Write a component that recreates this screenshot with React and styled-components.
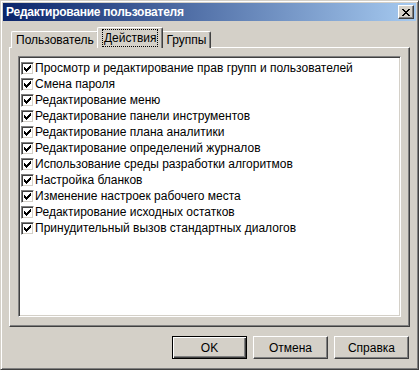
import React from 'react';
import styled, { createGlobalStyle } from 'styled-components';

const GlobalStyle = createGlobalStyle`
  html, body {
    margin: 0;
    padding: 0;
    background: #d4d0c8;
  }
  body {
    font-family: "Liberation Sans", Arial, sans-serif;
    font-size: 12px;
    color: #000;
  }
`;

const Window = styled.div`
  width: 419px;
  height: 370px;
  box-sizing: border-box;
  background: #d4d0c8;
  border: 1px solid;
  border-color: #d4d0c8 #404040 #404040 #d4d0c8;
  box-shadow: inset 1px 1px #fff, inset -1px -1px #808080;
  padding: 2px;
  display: flex;
  flex-direction: column;
`;

const TitleBar = styled.div`
  height: 18px;
  background: linear-gradient(to right, #0a246a, #a6caf0);
  display: flex;
  align-items: center;
  justify-content: space-between;
  padding: 0 2px 0 3px;
`;

const Title = styled.span`
  color: #fff;
  font-weight: bold;
  font-size: 12px;
  letter-spacing: -0.25px;
`;

const CloseButton = styled.button`
  width: 16px;
  height: 14px;
  padding: 0;
  background: #d4d0c8;
  border: 1px solid;
  border-color: #fff #404040 #404040 #fff;
  box-shadow: inset -1px -1px #808080;
  display: flex;
  align-items: center;
  justify-content: center;
`;

const Body = styled.div`
  flex: 1;
  display: flex;
  flex-direction: column;
  padding: 7px 6px 0 6px;
`;

const TabRow = styled.div`
  display: flex;
  align-items: flex-end;
  height: 20px;
  padding-left: 2px;
  position: relative;
  z-index: 1;
  margin-bottom: -1px;
`;

const Tab = styled.div`
  box-sizing: border-box;
  height: ${p => (p.active ? 21 : 17)}px;
  margin: 0 ${p => (p.active ? -2 : 0)}px;
  padding: 0 ${p => (p.active ? 4 : 2)}px;
  background: #d4d0c8;
  border: 1px solid #fff;
  border-right-color: #404040;
  border-bottom: none;
  border-radius: 2px 2px 0 0;
  box-shadow: inset -1px 0 #808080;
  display: flex;
  align-items: ${p => (p.active ? 'flex-start' : 'center')};
  padding-top: ${p => (p.active ? 1 : 0)}px;
  position: relative;
  z-index: ${p => (p.active ? 2 : 1)};
`;

const TabLabel = styled.span`
  padding: 1px 1px;
  border: 1px dotted ${p => (p.focused ? '#000' : 'transparent')};
  line-height: 14px;
`;

const Panel = styled.div`
  height: 280px;
  box-sizing: border-box;
  border: 1px solid;
  border-color: #fff #404040 #404040 #fff;
  box-shadow: inset -1px -1px #808080;
  padding: 8px 8px 9px 8px;
  display: flex;
`;

const ListBox = styled.div`
  flex: 1;
  background: #fff;
  border: 1px solid;
  border-color: #808080 #fff #fff #808080;
  box-shadow: inset 1px 1px #404040, inset -1px -1px #d4d0c8;
  padding: 3px 2px;
`;

const Item = styled.label`
  display: flex;
  align-items: center;
  height: 16px;
  gap: 1px;
  white-space: nowrap;
`;

const CheckBox = styled.span`
  width: 13px;
  height: 13px;
  box-sizing: border-box;
  border: 1px solid;
  border-color: #808080 #fff #fff #808080;
  box-shadow: inset 1px 1px #404040, inset -1px -1px #d4d0c8;
  background: #fff;
  display: flex;
  flex-shrink: 0;
`;

const ButtonRow = styled.div`
  display: flex;
  justify-content: flex-end;
  gap: 6px;
  padding: 9px 1px 0 0;
`;

const Button = styled.button`
  width: 75px;
  height: 23px;
  box-sizing: border-box;
  font-family: inherit;
  font-size: 12px;
  color: #000;
  background: #d4d0c8;
  padding: 0;
  border: 1px solid;
  border-color: ${p => (p.primary ? '#000' : '#fff #404040 #404040 #fff')};
  box-shadow: ${p =>
    p.primary
      ? 'inset 1px 1px #fff, inset -1px -1px #404040, inset -2px -2px #808080'
      : 'inset -1px -1px #808080'};
`;

const CheckMark = () => (
  <svg width="11" height="11" viewBox="0 0 11 11" shapeRendering="crispEdges">
    {[2, 3, 4, 3, 2, 1, 0].map((y, x) => (
      <rect key={x} x={x + 2} y={y + 2} width="1" height="3" fill="#000" />
    ))}
  </svg>
);

const CloseIcon = () => (
  <svg width="8" height="7" viewBox="0 0 8 7" shapeRendering="crispEdges">
    {[0, 1, 2, 3, 4, 5, 6].map(i => (
      <React.Fragment key={i}>
        <rect x={i} y={i} width="2" height="1" fill="#000" />
        <rect x={6 - i} y={i} width="2" height="1" fill="#000" />
      </React.Fragment>
    ))}
  </svg>
);

const rights = [
  'Просмотр и редактирование прав групп и пользователей',
  'Смена пароля',
  'Редактирование меню',
  'Редактирование панели инструментов',
  'Редактирование плана аналитики',
  'Редактирование определений журналов',
  'Использование среды разработки алгоритмов',
  'Настройка бланков',
  'Изменение настроек рабочего места',
  'Редактирование исходных остатков',
  'Принудительный вызов стандартных диалогов',
];

export default function App() {
  return (
    <>
      <GlobalStyle />
      <Window>
        <TitleBar>
          <Title>Редактирование пользователя</Title>
          <CloseButton>
            <CloseIcon />
          </CloseButton>
        </TitleBar>
        <Body>
          <TabRow>
            <Tab>
              <TabLabel>Пользователь</TabLabel>
            </Tab>
            <Tab active>
              <TabLabel focused>Действия</TabLabel>
            </Tab>
            <Tab>
              <TabLabel>Группы</TabLabel>
            </Tab>
          </TabRow>
          <Panel>
            <ListBox>
              {rights.map(r => (
                <Item key={r}>
                  <CheckBox>
                    <CheckMark />
                  </CheckBox>
                  {r}
                </Item>
              ))}
            </ListBox>
          </Panel>
          <ButtonRow>
            <Button primary>OK</Button>
            <Button>Отмена</Button>
            <Button>Справка</Button>
          </ButtonRow>
        </Body>
      </Window>
    </>
  );
}
